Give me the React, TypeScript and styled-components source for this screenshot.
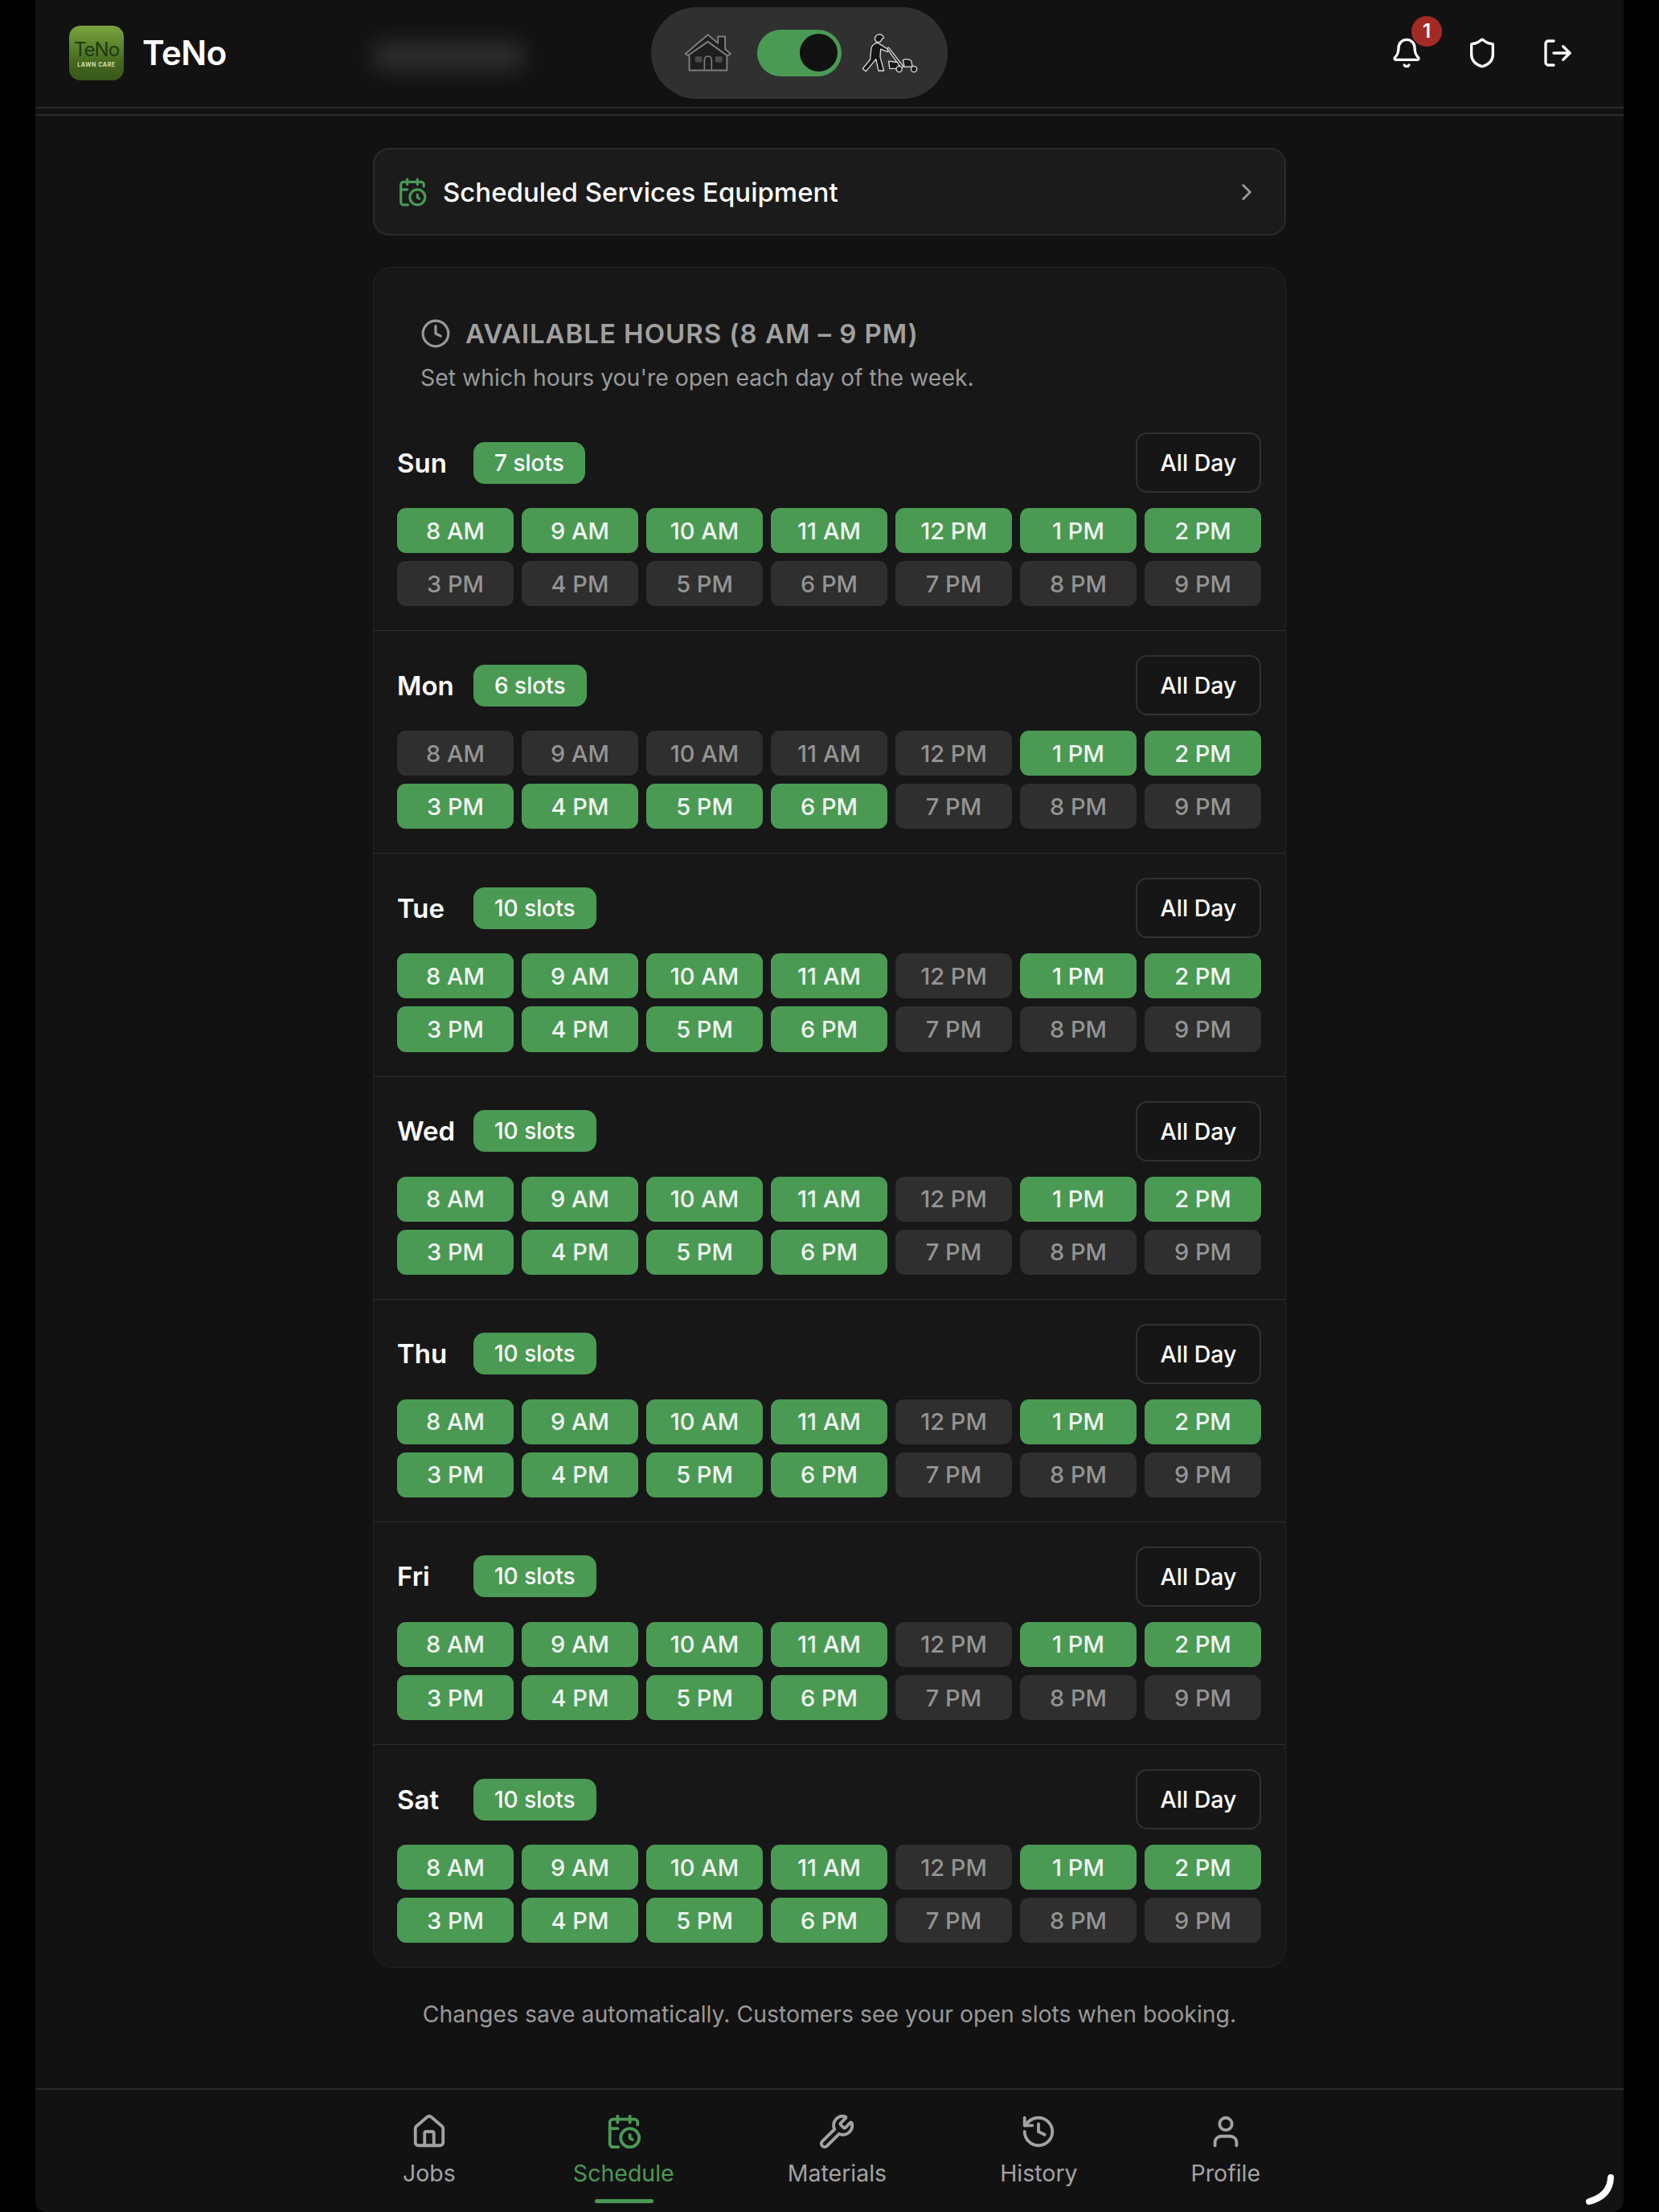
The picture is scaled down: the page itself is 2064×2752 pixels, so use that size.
import { Bell, CalendarClock, ChevronRight, Clock, History, House, LogOut, Shield, User, Wrench } from 'lucide-react'
import styled, { createGlobalStyle } from 'styled-components'

const GREEN = '#4a9a54'

const HOURS = ['8 AM', '9 AM', '10 AM', '11 AM', '12 PM', '1 PM', '2 PM', '3 PM', '4 PM', '5 PM', '6 PM', '7 PM', '8 PM', '9 PM']

const WEEK = [
  { day: 'Sun', open: ['8 AM', '9 AM', '10 AM', '11 AM', '12 PM', '1 PM', '2 PM'] },
  { day: 'Mon', open: ['1 PM', '2 PM', '3 PM', '4 PM', '5 PM', '6 PM'] },
  ...['Tue', 'Wed', 'Thu', 'Fri', 'Sat'].map(day => ({
    day,
    open: ['8 AM', '9 AM', '10 AM', '11 AM', '1 PM', '2 PM', '3 PM', '4 PM', '5 PM', '6 PM'],
  })),
]

const NAV = [
  { label: 'Jobs', Icon: House },
  { label: 'Schedule', Icon: CalendarClock, active: true },
  { label: 'Materials', Icon: Wrench },
  { label: 'History', Icon: History },
  { label: 'Profile', Icon: User },
]

const HouseArt = () => (
  <svg width="60" height="50" viewBox="32 44 182 150" fill="none">
    <path
      d="M122 50 L160 82 V57 H187 V104 L208 122 L194 130 V184 H52 V130 L37 122 Z"
      fill="#1d1e1d"
      stroke="#7c7d7c"
      strokeWidth="6"
      strokeLinejoin="round"
    />
    <path d="M50 126 L122 76 L194 128" stroke="#7c7d7c" strokeWidth="6" strokeLinecap="round" />
    <path d="M109 182 V146 Q109 131 122 131 Q136 131 136 146 V182" stroke="#7c7d7c" strokeWidth="5" />
    <path d="M74 132 H100 V154 H74 Z M150 132 H176 V154 H150 Z" fill="#4a4b4a" />
  </svg>
)

const MowerArt = () => (
  <svg width="71" height="50" viewBox="34 50 216 150" fill="none">
    <g fill="#151515" stroke="#dcdcdc" strokeWidth="4" strokeLinejoin="round">
      <path d="M84 72 Q86 54 102 54 Q114 56 118 68 L110 72 Q108 84 96 84 Q86 82 84 72 Z" />
      <path d="M84 90 Q92 82 104 92 L136 112 L132 120 L106 110 L104 140 L116 184 L118 192 H98 L88 148 L62 180 L50 194 L38 184 L66 150 L70 110 Q72 96 84 90 Z" />
      <path d="M130 108 L136 104 L192 176 L184 182 Z" />
      <path d="M136 156 L170 160 L182 184 H140 Z" />
      <path d="M190 152 Q204 144 222 154 L226 176 L196 178 Z" />
      <circle cx="176" cy="186" r="11" />
      <circle cx="232" cy="186" r="11" />
    </g>
  </svg>
)

const App = () => (
  <Frame>
    <GlobalStyle />
    <Header>
      <Logo>
        <LogoName>TeNo</LogoName>
        <LogoTag>LAWN CARE</LogoTag>
      </Logo>
      <Brand>TeNo</Brand>
      <BlurredName />
      <ModePill>
        <HouseArt />
        <Toggle>
          <Knob />
        </Toggle>
        <MowerArt />
      </ModePill>
      <HeaderActions>
        <BellWrap>
          <Bell size={40} />
          <Badge>1</Badge>
        </BellWrap>
        <Shield size={40} />
        <LogOut size={40} />
      </HeaderActions>
    </Header>
    <SecondRule />
    <Main>
      <EquipmentCard>
        <CalendarClock size={38} color={GREEN} />
        <EquipmentTitle>Scheduled Services Equipment</EquipmentTitle>
        <ChevronRight size={34} color="#999" />
      </EquipmentCard>
      <HoursCard>
        <HoursHead>
          <HoursTitleRow>
            <Clock size={38} color="#999" />
            <HoursTitle>AVAILABLE HOURS (8 AM – 9 PM)</HoursTitle>
          </HoursTitleRow>
          <HoursHint>Set which hours you're open each day of the week.</HoursHint>
        </HoursHead>
        {WEEK.map(row => (
          <DayRow key={row.day}>
            <DayHead>
              <DayName>{row.day}</DayName>
              <SlotCount>{row.open.length} slots</SlotCount>
              <AllDay>All Day</AllDay>
            </DayHead>
            <SlotGrid>
              {HOURS.map(hour => (
                <Slot key={hour} $on={row.open.includes(hour)}>{hour}</Slot>
              ))}
            </SlotGrid>
          </DayRow>
        ))}
      </HoursCard>
      <SaveNote>Changes save automatically. Customers see your open slots when booking.</SaveNote>
    </Main>
    <BottomNav>
      {NAV.map(({ label, Icon, active }) => (
        <NavItem key={label} $active={active}>
          <Icon size={46} />
          <NavLabel>{label}</NavLabel>
          {active && <NavMarker />}
        </NavItem>
      ))}
    </BottomNav>
    <CornerMark width="40" height="40" viewBox="0 0 40 40" fill="none">
      <path d="M33 5 Q32 28 6 35" stroke="#fff" strokeWidth="8" strokeLinecap="round" />
    </CornerMark>
  </Frame>
)

export default App

const GlobalStyle = createGlobalStyle`
  html, body {
    margin: 0;
    padding: 0;
    background: #000;
  }
  * {
    box-sizing: border-box;
  }
`
const Frame = styled.div`
  position: relative;
  display: flex;
  flex-direction: column;
  width: 1976px;
  height: 2752px;
  margin-left: 44px;
  overflow: hidden;
  background: #121212;
  border-radius: 0 0 14px 14px;
  color: #fff;
  font-family: Inter, "Liberation Sans", sans-serif;
`
const Header = styled.header`
  display: flex;
  align-items: center;
  flex-shrink: 0;
  height: 135px;
  padding: 0 62px 2px 42px;
  border-bottom: 2px solid #2c2c2c;
`
const SecondRule = styled.div`
  flex-shrink: 0;
  height: 2px;
  margin-top: 7px;
  background: #2c2c2c;
`
const Logo = styled.div`
  display: flex;
  flex-direction: column;
  align-items: center;
  justify-content: center;
  width: 68px;
  height: 68px;
  border-radius: 14px;
  background: linear-gradient(#7ba53e, #45691f 65%, #37561b);
`
const LogoName = styled.div`
  margin-top: 4px;
  font-size: 24px;
  line-height: 26px;
  letter-spacing: -1px;
  color: #1f3a12;
`
const LogoTag = styled.div`
  font-size: 7px;
  line-height: 12px;
  font-weight: 700;
  letter-spacing: 0.6px;
  white-space: nowrap;
  color: #d3dfb8;
`
const Brand = styled.div`
  width: 103px;
  margin-left: 23px;
  font-size: 42px;
  font-weight: 600;
  letter-spacing: -0.5px;
`
const BlurredName = styled.div`
  width: 186px;
  height: 36px;
  margin-left: 185px;
  margin-top: 9px;
  background: #2e2e2e;
  filter: blur(13px);
`
const ModePill = styled.div`
  display: flex;
  align-items: center;
  width: 369px;
  height: 114px;
  margin-left: 159px;
  padding-left: 41px;
  border-radius: 57px;
  background: #2f302f;
`
const Toggle = styled.div`
  display: flex;
  align-items: center;
  justify-content: flex-end;
  width: 105px;
  height: 58px;
  margin: 0 25px 0 31px;
  padding-right: 5px;
  border-radius: 29px;
  background: ${GREEN};
`
const Knob = styled.div`
  width: 47px;
  height: 47px;
  border-radius: 50%;
  background: #111;
`
const HeaderActions = styled.div`
  display: flex;
  align-items: center;
  gap: 54px;
  margin-left: auto;
  color: #fff;
`
const BellWrap = styled.div`
  position: relative;
  display: flex;
`
const Badge = styled.div`
  position: absolute;
  top: -26px;
  left: 26px;
  display: flex;
  align-items: center;
  justify-content: center;
  width: 38px;
  height: 38px;
  border-radius: 50%;
  background: #a42a25;
  font-size: 24px;
  font-weight: 600;
`
const Main = styled.main`
  flex: 1;
  display: flex;
  flex-direction: column;
  width: 1136px;
  margin: 0 auto;
  padding-top: 40px;
`
const EquipmentCard = styled.div`
  display: flex;
  align-items: center;
  height: 109px;
  padding: 0 30px 0 28px;
  background: #1b1b1b;
  border: 2px solid #2a2a2a;
  border-radius: 20px;
`
const EquipmentTitle = styled.div`
  flex: 1;
  margin-left: 19px;
  font-size: 33px;
  font-weight: 500;
`
const HoursCard = styled.section`
  margin-top: 39px;
  background: #171717;
  border: 1px solid #242424;
  border-radius: 24px;
`
const HoursHead = styled.div`
  padding: 62px 30px 18px 58px;
`
const HoursTitleRow = styled.div`
  display: flex;
  align-items: center;
  gap: 18px;
  height: 40px;
`
const HoursTitle = styled.h2`
  margin: 0;
  font-size: 33px;
  font-weight: 600;
  letter-spacing: 0.95px;
  color: #a0a0a0;
`
const HoursHint = styled.p`
  margin: 15px 0 0;
  font-size: 28.4px;
  line-height: 40px;
  color: #9a9a9a;
`
const DayRow = styled.div`
  padding: 30px 30px 30px 29px;
  & + & {
    border-top: 1px solid #2e2e2e;
  }
`
const DayHead = styled.div`
  display: flex;
  align-items: center;
  height: 75px;
`
const DayName = styled.div`
  width: 95px;
  font-size: 33px;
  font-weight: 600;
`
const SlotCount = styled.div`
  display: flex;
  align-items: center;
  height: 52px;
  padding: 0 26px;
  border-radius: 14px;
  background: ${GREEN};
  font-size: 28px;
  font-weight: 500;
`
const AllDay = styled.button`
  width: 156px;
  height: 75px;
  margin-left: auto;
  padding: 0;
  background: #161616;
  border: 2px solid #303030;
  border-radius: 14px;
  color: #fff;
  font-family: inherit;
  font-size: 28.5px;
  font-weight: 500;
`
const SlotGrid = styled.div`
  display: grid;
  grid-template-columns: repeat(7, 1fr);
  grid-auto-rows: 56.1px;
  gap: 10px;
  margin-top: 19px;
`
const Slot = styled.div<{ $on: boolean }>`
  display: flex;
  align-items: center;
  justify-content: center;
  border-radius: 11px;
  background: ${p => (p.$on ? GREEN : '#2e2f2e')};
  color: ${p => (p.$on ? '#f2f7f2' : '#949494')};
  font-size: 29px;
  font-weight: 500;
`
const SaveNote = styled.p`
  margin: 38px 0 0;
  text-align: center;
  font-size: 28.4px;
  line-height: 40px;
  color: #999;
`
const BottomNav = styled.nav`
  display: flex;
  justify-content: center;
  gap: 141px;
  flex-shrink: 0;
  height: 154px;
  padding-top: 29px;
  border-top: 2px solid #2c2c2c;
`
const NavItem = styled.div<{ $active?: boolean }>`
  position: relative;
  display: flex;
  flex-direction: column;
  align-items: center;
  min-width: 76px;
  color: ${p => (p.$active ? GREEN : '#a3a3a3')};
`
const NavLabel = styled.div`
  margin-top: 11px;
  font-size: 28.5px;
  line-height: 36px;
  font-weight: 400;
`
const NavMarker = styled.div`
  position: absolute;
  top: 107px;
  left: 50%;
  width: 73px;
  height: 5px;
  margin-left: -36px;
  border-radius: 3px;
  background: ${GREEN};
`
const CornerMark = styled.svg`
  position: absolute;
  right: 9px;
  bottom: 8px;
`
